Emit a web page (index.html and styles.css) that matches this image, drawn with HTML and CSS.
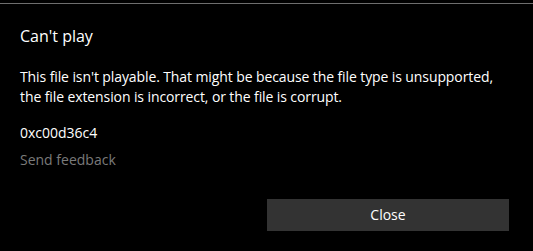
FILE: index.html
```html
<!DOCTYPE html>
<html lang="en">
<head>
  <meta charset="UTF-8" />
  <meta name="viewport" content="width=device-width, initial-scale=1.0" />
  <title>Can't play</title>
  <link rel="stylesheet" href="styles.css">
</head>
<body>
  <div class="dialog">
    <div class="title">Can't play</div>
    <p class="message">This file isn't playable. That might be because the file type is unsupported,<br>the file extension is incorrect, or the file is corrupt.</p>
    <div class="code">0xc00d36c4</div>
    <a class="feedback" href="#">Send feedback</a>
    <div class="actions">
      <button class="close-btn">Close</button>
    </div>
  </div>
</body>
</html>
```

FILE: styles.css
```css
html, body {
  height: 100%;
  margin: 0;
}
body {
  background: #000;
  color: #fff;
  font-family: "Open Sans", "Noto Sans", sans-serif;
  overflow: hidden;
}
.dialog {
  margin-top: 3px;
  border-top: 1px solid #6e6e6e;
  padding: 21px 24px 0 20px;
  display: flex;
  flex-direction: column;
}
.title {
  font-size: 16px;
  line-height: 22px;
}
.message {
  margin: 20px 0 0;
  font-size: 14px;
  line-height: 20px;
  letter-spacing: -0.1px;
}
.code {
  margin-top: 16px;
  font-size: 14px;
  line-height: 20px;
}
.feedback {
  margin-top: 7px;
  font-size: 14px;
  line-height: 20px;
  color: #7a7a7a;
  text-decoration: none;
  align-self: flex-start;
}
.actions {
  display: flex;
  justify-content: flex-end;
  margin-top: 29px;
}
.close-btn {
  width: 242px;
  height: 32px;
  border: none;
  background: #333;
  color: #fff;
  font-family: inherit;
  font-size: 14px;
  line-height: 32px;
  padding: 0;
}
```
